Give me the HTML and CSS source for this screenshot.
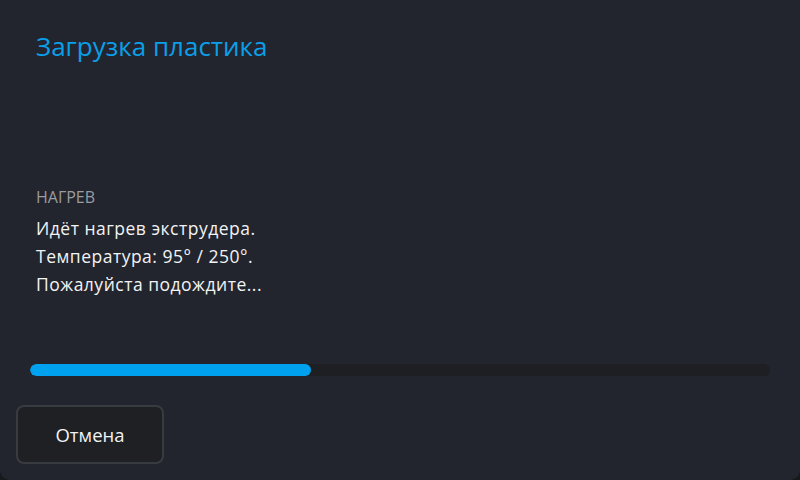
FILE: index.html
```html
<!DOCTYPE html>
<html lang="ru">
<head>
<meta charset="utf-8">
<link rel="stylesheet" href="styles.css">
</head>
<body>
<div class="app">
  <h1 class="title">Загрузка пластика</h1>
  <div class="content">
    <div class="label">НАГРЕВ</div>
    <p class="message">Идёт нагрев экструдера.<br>Температура: 95° / 250°.<br>Пожалуйста подождите...</p>
  </div>
  <div class="progress"><div class="progress-fill" style="width: 38%"></div></div>
  <div class="actions"><button class="btn">Отмена</button></div>
</div>
</body>
</html>
```
FILE: styles.css
```css
html, body {
  margin: 0;
  padding: 0;
  background: #17191d;
}
.app {
  width: 800px;
  height: 480px;
  box-sizing: border-box;
  background: #22252d;
  border-radius: 0 0 10px 10px;
  font-family: "Open Sans", "Noto Sans", sans-serif;
  display: flex;
  flex-direction: column;
  padding: 0 30px 16px 16px;
}
.title {
  margin: 28px 0 0 20px;
  font-size: 26px;
  font-weight: 400;
  line-height: 36px;
  color: #0a9fe9;
}
.content {
  margin: 123px 0 0 20px;
}
.label {
  font-size: 16px;
  line-height: 20px;
  color: #9a9ca0;
}
.message {
  margin: 7px 0 0;
  font-size: 17.5px;
  letter-spacing: 0.5px;
  line-height: 28px;
  color: #f2f3f5;
}
.progress {
  margin: 66px 0 0 14px;
  height: 12px;
  border-radius: 6px;
  background: #1d1f23;
  overflow: hidden;
}
.progress-fill {
  height: 100%;
  border-radius: 6px;
  background: #00a2f0;
}
.actions {
  margin-top: auto;
  display: flex;
}
.btn {
  width: 148px;
  height: 59px;
  box-sizing: border-box;
  border: 2px solid #383b40;
  border-radius: 8px;
  background: #1e2024;
  color: #f2f3f5;
  font-family: "Open Sans", "Noto Sans", sans-serif;
  font-size: 18.5px;
}
```
